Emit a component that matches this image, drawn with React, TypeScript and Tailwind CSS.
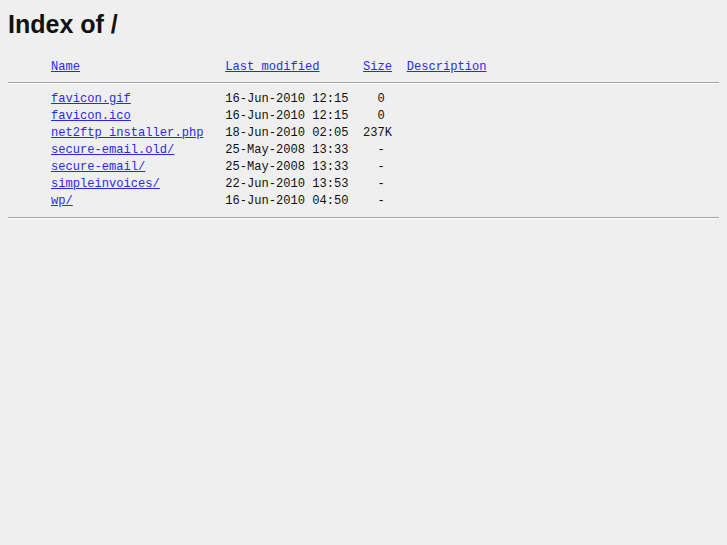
const rows = [
  { name: 'favicon.gif', date: '16-Jun-2010 12:15', size: '  0' },
  { name: 'favicon.ico', date: '16-Jun-2010 12:15', size: '  0' },
  { name: 'net2ftp_installer.php', date: '18-Jun-2010 02:05', size: '237K' },
  { name: 'secure-email.old/', date: '25-May-2008 13:33', size: '  -' },
  { name: 'secure-email/', date: '25-May-2008 13:33', size: '  -' },
  { name: 'simpleinvoices/', date: '22-Jun-2010 13:53', size: '  -' },
  { name: 'wp/', date: '16-Jun-2010 04:50', size: '  -' },
]

const link = 'text-[#2a2aee] underline'

export default function App() {
  return (
    <div className="min-h-[545px] bg-[#efefef] px-2 pt-[10px] text-[#111]">
      <h1
        className="text-[25px] font-bold leading-[28px]"
        style={{ fontFamily: '"Liberation Sans", Arial, sans-serif' }}
      >
        Index of /
      </h1>
      <pre
        className="mt-[21px] text-[12.1px] leading-[17px]"
        style={{ fontFamily: '"Liberation Mono", "Courier New", monospace' }}
      >
        <div className="pl-[43px]">
          <a className={link}>Name</a>
          {' '.repeat(20)}
          <a className={link}>Last modified</a>
          {' '.repeat(6)}
          <a className={link}>Size</a>
          {'  '}
          <a className={link}>Description</a>
        </div>
        <div className="mt-[6px] mb-[7px] h-[2px] border-t border-[#a3a3a3] border-b border-b-[#fbfbfb]" />
        {rows.map((r) => (
          <div key={r.name} className="pl-[43px]">
            <a className={link}>{r.name}</a>
            {' '.repeat(24 - r.name.length)}
            {r.date}
            {'  '}
            {r.size}
          </div>
        ))}
        <div className="mt-[7px] h-[2px] border-t border-[#a3a3a3] border-b border-b-[#fbfbfb]" />
      </pre>
    </div>
  )
}
